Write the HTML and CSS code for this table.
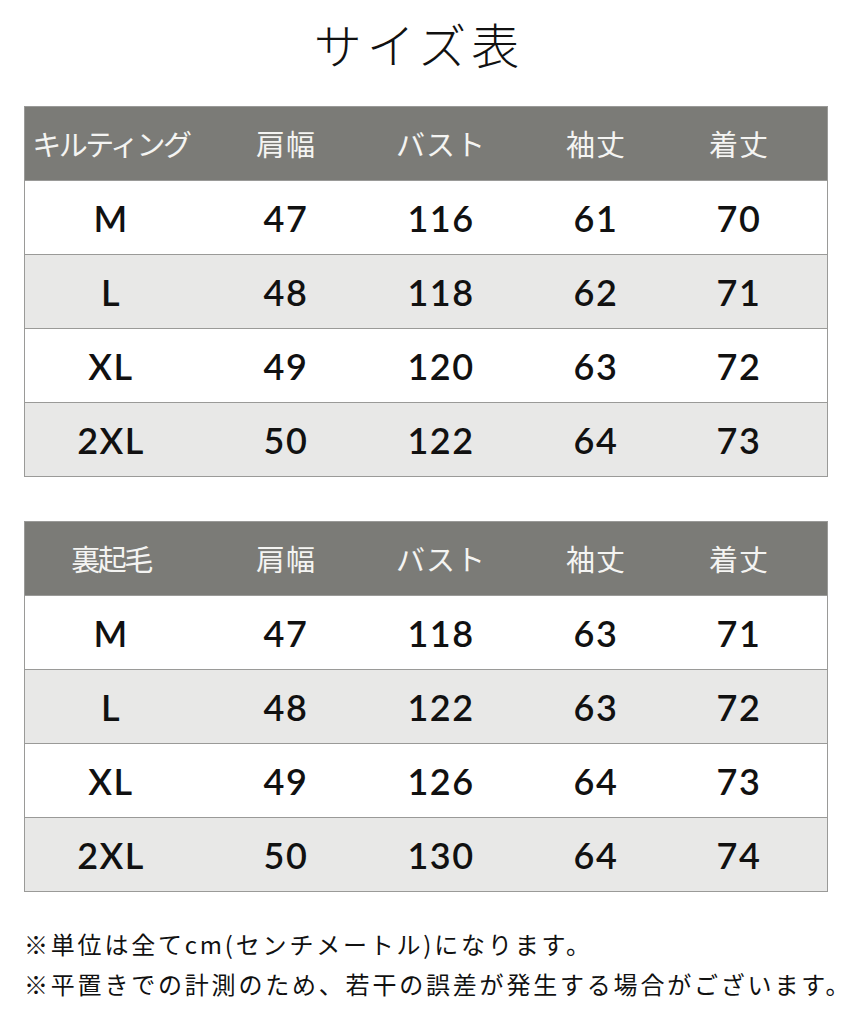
FILE: index.html
```html
<!DOCTYPE html>
<html lang="ja">
<head>
<meta charset="utf-8">
<title>サイズ表</title>
<link rel="stylesheet" href="styles.css">
</head>
<body>
<main class="page">
  <h1 class="title">サイズ表</h1>

  <section class="table">
    <div class="row head">
      <div class="cell">キルティング</div><div class="cell">肩幅</div><div class="cell">バスト</div><div class="cell">袖丈</div><div class="cell">着丈</div>
    </div>
    <div class="row">
      <div class="cell">M</div><div class="cell">47</div><div class="cell">116</div><div class="cell">61</div><div class="cell">70</div>
    </div>
    <div class="row alt">
      <div class="cell">L</div><div class="cell">48</div><div class="cell">118</div><div class="cell">62</div><div class="cell">71</div>
    </div>
    <div class="row">
      <div class="cell">XL</div><div class="cell">49</div><div class="cell">120</div><div class="cell">63</div><div class="cell">72</div>
    </div>
    <div class="row alt">
      <div class="cell">2XL</div><div class="cell">50</div><div class="cell">122</div><div class="cell">64</div><div class="cell">73</div>
    </div>
  </section>

  <section class="table">
    <div class="row head">
      <div class="cell">裏起毛</div><div class="cell">肩幅</div><div class="cell">バスト</div><div class="cell">袖丈</div><div class="cell">着丈</div>
    </div>
    <div class="row">
      <div class="cell">M</div><div class="cell">47</div><div class="cell">118</div><div class="cell">63</div><div class="cell">71</div>
    </div>
    <div class="row alt">
      <div class="cell">L</div><div class="cell">48</div><div class="cell">122</div><div class="cell">63</div><div class="cell">72</div>
    </div>
    <div class="row">
      <div class="cell">XL</div><div class="cell">49</div><div class="cell">126</div><div class="cell">64</div><div class="cell">73</div>
    </div>
    <div class="row alt">
      <div class="cell">2XL</div><div class="cell">50</div><div class="cell">130</div><div class="cell">64</div><div class="cell">74</div>
    </div>
  </section>

  <div class="notes">
    <p>※単位は全てcm(センチメートル)になります。</p>
    <p>※平置きでの計測のため、若干の誤差が発生する場合がございます。</p>
  </div>
</main>
</body>
</html>
```

FILE: styles.css
```css
html, body {
  margin: 0;
  padding: 0;
  background: #ffffff;
}

.page {
  width: 853px;
  height: 1024px;
  box-sizing: border-box;
  padding: 0 25px 0 24px;
  font-family: "Noto Sans CJK JP", "Noto Sans", sans-serif;
  color: #111;
  overflow: hidden;
}

.title {
  margin: 0;
  height: 106px;
  box-sizing: border-box;
  padding-top: 10px;
  padding-right: 14px;
  text-align: center;
  font-size: 48px;
  font-weight: 300;
  letter-spacing: 5px;
  line-height: 66px;
  color: #111;
}

.table {
  border: 1.5px solid #9a9a98;
  margin-bottom: 44px;
}

.row {
  display: grid;
  grid-template-columns: 172px 178px 132px 178px 108px 1fr;
  height: 74px;
  align-items: center;
  background: #ffffff;
  border-top: 1.5px solid #9a9a98;
  box-sizing: border-box;
}

.row.alt {
  background: #e8e8e7;
}

.row.head {
  background: #7b7b77;
  border-top: none;
  height: 73px;
}

.cell {
  text-align: center;
  font-family: "Lato", "Noto Sans", sans-serif;
  font-weight: 600;
  font-size: 36px;
  letter-spacing: 1.5px;
  color: #111;
  line-height: 1;
}

.head .cell {
  font-family: "Noto Sans CJK JP", "Noto Sans", sans-serif;
  font-weight: 400;
  font-size: 29px;
  color: #f4f4f2;
  letter-spacing: 1px;
}

.head .cell:first-child {
  letter-spacing: -2.5px;
}

.notes {
  margin-top: -12px;
}

.notes p {
  margin: 0;
  font-size: 24px;
  line-height: 40px;
  letter-spacing: 2.8px;
  color: #111;
  white-space: nowrap;
}
```
